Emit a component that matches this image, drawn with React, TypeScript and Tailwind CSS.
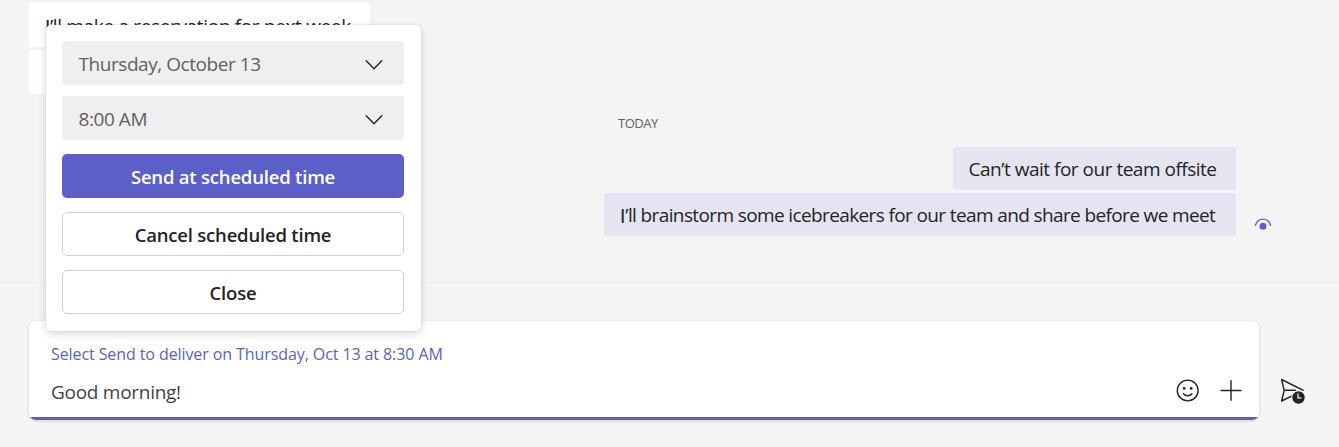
import React from "react";

function Chevron() {
  return (
    <svg width="18" height="12" viewBox="0 0 18 12" fill="none" stroke="#242424" strokeWidth="1.4" strokeLinecap="round" strokeLinejoin="round">
      <path d="M1.2 1.8 9 9.8l7.8-8" />
    </svg>
  );
}

function SelectField({ children }: { children: React.ReactNode }) {
  return (
    <button className="flex h-11 w-full items-center justify-between rounded bg-[#efefef] pt-[3px] pr-[21px] pl-[16.500px] text-[19px] leading-none text-[#616161]">
      <span className="whitespace-nowrap tracking-[-0.44px]">{children}</span>
      <Chevron />
    </button>
  );
}

function SchedulePopup() {
  return (
    <div className="absolute top-[25px] left-[46px] flex h-[306px] w-[375px] flex-col rounded-[5px] bg-white pt-4 pr-[17px] pl-4 shadow-[0_3px_8px_rgba(0,0,0,0.15),0_0_2px_rgba(0,0,0,0.12)]">
      <SelectField>Thursday, October 13</SelectField>
      <div className="mt-[11px]">
        <SelectField>8:00 AM</SelectField>
      </div>
      <div className="mt-[14px] flex flex-col gap-[14px] text-[18.5px] leading-none font-semibold tracking-[-0.2px] text-[#242424]">
        <button className="h-11 rounded-[5px] bg-[#5b5fc7] pt-0.5 text-white">Send at scheduled time</button>
        <button className="h-11 rounded-[5px] border border-[#d1d1d1] bg-white pt-0.5">Cancel scheduled time</button>
        <button className="h-11 rounded-[5px] border border-[#d1d1d1] bg-white pt-0.5">Close</button>
      </div>
    </div>
  );
}

function SeenIcon() {
  return (
    <svg width="18" height="14" viewBox="0 0 18 14">
      <path d="M1.4 8.2C2.6 4.2 5.4 2.1 9 2.1s6.400 2.100 7.600 6.100" fill="none" stroke="#5b5fc7" strokeWidth="1.4" strokeLinecap="round" />
      <circle cx="9" cy="9.300" r="3.500" fill="#5b5fc7" />
    </svg>
  );
}

function SmileIcon() {
  return (
    <svg width="24" height="24" viewBox="0 0 24 24" fill="none" stroke="#242424" strokeWidth="1.400" strokeLinecap="round">
      <circle cx="11.700" cy="11.500" r="10.4" />
      <circle cx="8.200" cy="9.400" r="1.400" fill="#242424" stroke="none" />
      <circle cx="15.200" cy="9.400" r="1.400" fill="#242424" stroke="none" />
      <path d="M7.400 14.700c2.200 2.800 6.400 2.800 8.600 0" />
    </svg>
  );
}

function PlusIcon() {
  return (
    <svg width="22" height="22" viewBox="0 0 22 22" stroke="#242424" strokeWidth="1.400" strokeLinecap="round">
      <path d="M11 .8v19.400M1 10.500h20" />
    </svg>
  );
}

function ScheduleSendIcon() {
  return (
    <svg width="28" height="28" viewBox="0 0 28 28" fill="none">
      <path d="M24.300 13.300 2.600 2.500 5.200 13.300 2.600 24 13 18.900M5.200 13.300h11.200" stroke="#242424" strokeWidth="1.450" strokeLinejoin="round" strokeLinecap="round" />
      <circle cx="19.500" cy="20.500" r="7.200" fill="#f4f4f4" />
      <circle cx="19.500" cy="20.500" r="6.200" fill="#242424" />
      <path d="M19 17v3.900h2.900" stroke="#f4f4f4" strokeWidth="1.300" strokeLinecap="round" strokeLinejoin="round" />
    </svg>
  );
}

export default function App() {
  return (
    <div className="relative flex h-[447px] w-[1339px] flex-col overflow-hidden bg-[#f4f4f4] font-['Open_Sans','Noto_Sans',sans-serif]">
      <main className="flex h-[283px] shrink-0 border-b border-[#ededed] pl-[29px]">
        <div className="flex w-[341px] flex-col items-start gap-[3px] pt-[3px]">
          <div className="flex h-[44px] w-[341px] items-center rounded-tr bg-white pt-[3px] pl-4 text-[19px] leading-none tracking-[-0.34px] whitespace-nowrap text-[#242424]">
            <span className="font-['Lato',sans-serif]">I</span>’ll make a reservation for next week
          </div>
          <div className="h-[44px] w-[280px] rounded-b bg-white" />
        </div>
        <div className="ml-[234px] flex w-[632px] flex-col items-end pt-[115px]">
          <div className="h-4 self-start pl-[14px] text-[13px] leading-4 tracking-[-0.5px] text-[#616161]">TODAY</div>
          <div className="mt-4 flex h-[43px] w-[283px] items-center rounded-l rounded-tr bg-[#e5e5f1] pt-[2px] pl-[15.500px] text-[19px] leading-none tracking-[-0.49px] whitespace-nowrap text-[#242424]">
            Can’t wait for our team offsite
          </div>
          <div className="mt-[3px] flex h-[43px] w-[632px] items-center rounded-l rounded-tr bg-[#e5e5f1] pt-px pl-4 text-[19px] leading-none tracking-[-0.62px] whitespace-nowrap text-[#242424]">
            <span className="font-['Lato',sans-serif] tracking-normal">I</span>’ll brainstorm some icebreakers for our team and share before we meet
          </div>
        </div>
        <div className="pt-[217px] pl-[18px]">
          <SeenIcon />
        </div>
      </main>
      <footer className="flex pt-[38px] pl-[29px]">
        <section className="flex h-[99px] w-[1230px] flex-col overflow-hidden rounded-[7px] bg-white shadow-[0_1px_3px_rgba(0,0,0,0.15)]">
          <p className="mt-[23px] h-5 pl-[22px] text-[16px] leading-5 tracking-[-0.09px] whitespace-nowrap text-[#5b5fc7]">
            Select Send to deliver on Thursday, Oct 13 at 8:30 AM
          </p>
          <div className="mt-[13px] flex h-7 items-center pr-[17px] pl-[22px]">
            <span className="grow pt-px text-[19px] leading-7 tracking-[-0.28px] text-[#424242]">Good morning!</span>
            <button aria-label="Emoji"><SmileIcon /></button>
            <button aria-label="More options" className="ml-5"><PlusIcon /></button>
          </div>
          <div className="mt-auto h-[3px] bg-[#6264a7]" />
        </section>
        <button aria-label="Scheduled send" className="mt-[56px] ml-5 h-7">
          <ScheduleSendIcon />
        </button>
      </footer>
      <SchedulePopup />
    </div>
  );
}
